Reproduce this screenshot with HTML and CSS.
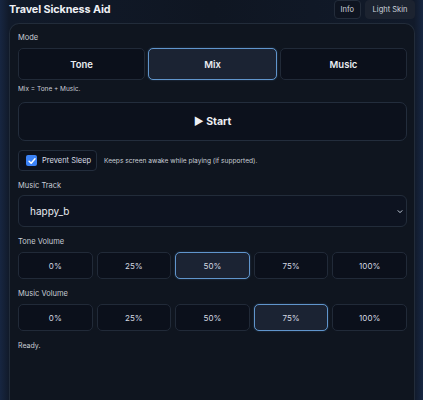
FILE: index.html
```html
<!DOCTYPE html>
<html lang="en">
<head>
<meta charset="utf-8">
<title>Travel Sickness Aid</title>
<link rel="stylesheet" href="styles.css">
</head>
<body>
<div class="page">
  <header class="topbar">
    <h1 class="title">Travel Sickness Aid</h1>
    <div class="top-actions">
      <button class="top-btn">Info</button>
      <button class="top-btn top-btn-alt">Light Skin</button>
    </div>
  </header>
  <main class="card">
    <div class="label">Mode</div>
    <div class="seg seg-3">
      <button class="opt opt-lg">Tone</button>
      <button class="opt opt-lg active">Mix</button>
      <button class="opt opt-lg">Music</button>
    </div>
    <div class="note">Mix = Tone + Music.</div>
    <button class="start">&#9654; Start</button>
    <div class="sleep-row">
      <label class="sleep">
        <span class="check"><svg viewBox="0 0 12 12" width="10" height="10"><path d="M2.5 6.3 L5 8.7 L9.6 3.4" fill="none" stroke="#fff" stroke-width="1.8" stroke-linecap="round" stroke-linejoin="round"/></svg></span>
        <span class="sleep-text">Prevent Sleep</span>
      </label>
      <span class="hint">Keeps screen awake while playing (if supported).</span>
    </div>
    <div class="label label-sec">Music Track</div>
    <div class="select">
      <span class="select-value">happy_b</span>
      <svg class="chev" viewBox="0 0 8 6" width="6" height="5"><path d="M1 1.5 L4 4.5 L7 1.5" fill="none" stroke="#cbd5e1" stroke-width="1.3"/></svg>
    </div>
    <div class="label label-sec">Tone Volume</div>
    <div class="seg seg-5">
      <button class="opt">0%</button>
      <button class="opt">25%</button>
      <button class="opt active">50%</button>
      <button class="opt">75%</button>
      <button class="opt">100%</button>
    </div>
    <div class="label label-sec">Music Volume</div>
    <div class="seg seg-5">
      <button class="opt">0%</button>
      <button class="opt">25%</button>
      <button class="opt">50%</button>
      <button class="opt active">75%</button>
      <button class="opt">100%</button>
    </div>
    <div class="status">Ready.</div>
  </main>
</div>
</body>
</html>
```

FILE: styles.css
```css
* { box-sizing: border-box; }
html, body { margin: 0; height: 100%; }
body {
  background: linear-gradient(90deg, #172641 0px, #111a2a 9px, #0f1622 50%, #111a2a 414px, #172641 423px);
  font-family: Inter, "Noto Sans", sans-serif;
  color: #e5e7eb;
  overflow: hidden;
}
.page { padding: 0 8px 0 9px; }
.topbar {
  display: flex;
  align-items: center;
  justify-content: space-between;
  height: 19px;
}
.title {
  margin: 0;
  font-size: 10.8px;
  font-weight: 700;
  color: #eef0f4;
  letter-spacing: -0.1px;
}
.top-actions { display: flex; gap: 4px; margin-top: -1px; }
.top-btn {
  font-family: inherit;
  font-size: 7.5px;
  color: #cfd5de;
  background: #0e1420;
  border: 1px solid #232c3a;
  border-radius: 4px;
  height: 19px;
  padding: 0 6px;
  white-space: nowrap;
}
.top-btn-alt { background: #1c2330; padding: 0 6px; width: 50px; border-color: #1c2330; }
.card {
  margin-top: 4px;
  background: #0f151f;
  border: 1px solid #222c3a;
  border-bottom: none;
  border-radius: 10px 10px 0 0;
  padding: 8px 7px 0 8px;
  height: 377px;
  display: flex;
  flex-direction: column;
}
.label {
  font-size: 7.5px;
  line-height: 12px;
  color: #c6ccd5;
}
.label-sec { margin-top: 9px; }
.seg { display: grid; gap: 4px; margin-top: 4px; }
.seg-3 { grid-template-columns: 127px 129px 127px; gap: 3px; }
.seg-5 { grid-template-columns: repeat(5, 1fr); height: 27px; }
.opt {
  font-family: inherit;
  background: #0b101b;
  border: 1px solid #212a38;
  border-radius: 5px;
  color: #d4d9e1;
  font-size: 8px;
  padding: 0;
}
.opt-lg { height: 32px; font-size: 9.5px; font-weight: 600; color: #e8ebf0; }
.opt.active {
  background: #1b2333;
  border: 1.5px solid #6095cc;
  box-shadow: 0 0 2px rgba(96, 149, 204, 0.4);
}
.note {
  margin-top: 4px;
  font-size: 6.5px;
  line-height: 10px;
  color: #c9ced6;
}
.start {
  margin-top: 8px;
  height: 39px;
  font-family: inherit;
  font-size: 10.5px;
  font-weight: 700;
  color: #eef0f4;
  background: #0c111c;
  border: 1px solid #232d3c;
  border-radius: 7px;
}
.sleep-row {
  margin-top: 9px;
  display: flex;
  align-items: center;
  gap: 7px;
}
.sleep {
  display: flex;
  align-items: center;
  gap: 5px;
  height: 21px;
  width: 79px;
  padding-left: 7px;
  border: 1px solid #232d3c;
  border-radius: 4px;
  background: #0c111c;
}
.check {
  width: 11px;
  height: 11px;
  border-radius: 2px;
  background: #3b82f6;
  display: flex;
  align-items: center;
  justify-content: center;
}
.sleep-text { font-size: 7.5px; color: #d9dde4; }
.hint { font-size: 6.6px; color: #c9ced6; }
.select {
  margin-top: 3px;
  height: 32px;
  border: 1px solid #222c3a;
  border-radius: 6px;
  background: #0d1320;
  display: flex;
  align-items: center;
  justify-content: space-between;
  padding: 0 3px 0 11px;
}
.select-value { font-size: 10px; color: #e7eaef; }
.status {
  margin-top: 9px;
  font-size: 7px;
  line-height: 12px;
  color: #c9ced6;
}
```
